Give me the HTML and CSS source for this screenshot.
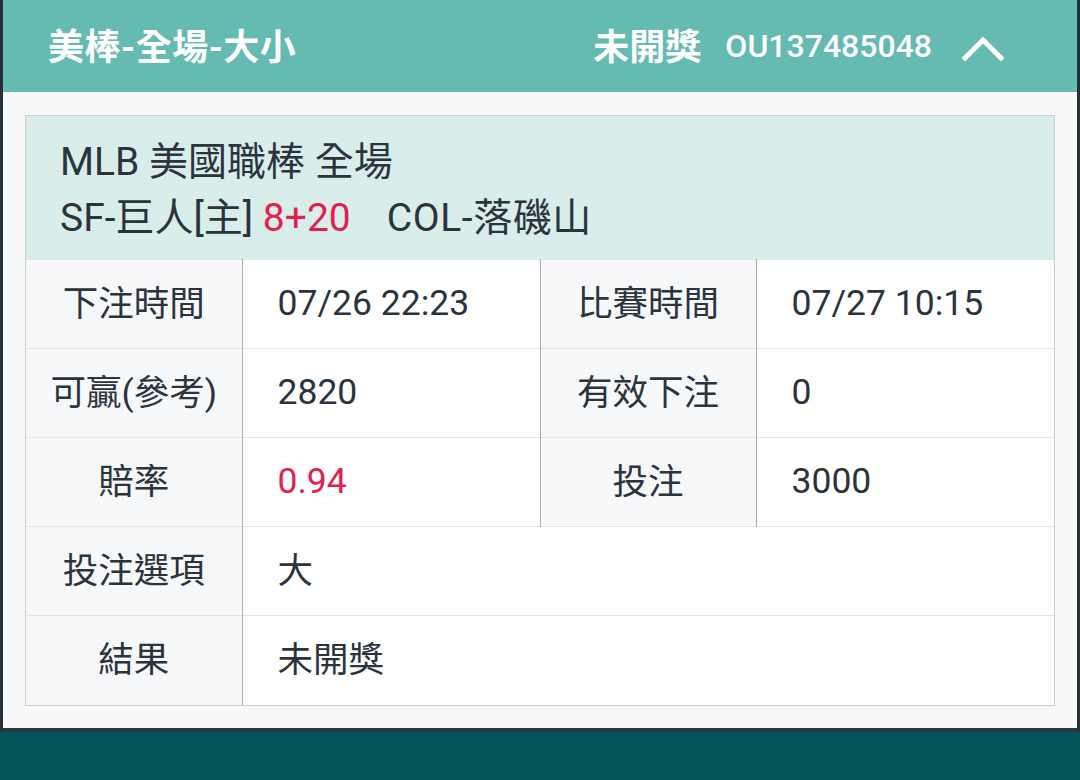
FILE: index.html
```html
<!DOCTYPE html>
<html lang="zh-Hant">

<head>
    <meta charset="UTF-8">
    <meta name="viewport" content="width=device-width, initial-scale=1.0">
    <title>注單明細</title>
    <link rel="stylesheet" href="styles.css">
</head>

<body>
    <div class="screen">
        <div class="sheet">
            <header class="sheet-head">
                <h1 class="title">美棒-全場-大小</h1>
                <div class="head-right">
                    <span class="status">未開獎</span>
                    <span class="order-no">OU137485048</span>
                    <svg class="chevron" width="42" height="26" viewBox="0 0 42 26">
                        <polyline points="3,23 21,5 39,23" fill="none" stroke="#fff" stroke-width="5" stroke-linecap="square"/>
                    </svg>
                </div>
            </header>

            <div class="sheet-body">
                <div class="bet-card">
                    <div class="match">
                        <p>MLB 美國職棒 全場</p>
                        <p>SF-巨人[主] <span class="hl">8+20</span><span class="away">COL-落磯山</span></p>
                    </div>

                    <table class="detail">
                        <colgroup>
                            <col class="c-label">
                            <col class="c-value">
                            <col class="c-label2">
                            <col>
                        </colgroup>
                        <tr>
                            <th>下注時間</th>
                            <td>07/26 22:23</td>
                            <th>比賽時間</th>
                            <td>07/27 10:15</td>
                        </tr>
                        <tr>
                            <th>可贏(參考)</th>
                            <td>2820</td>
                            <th>有效下注</th>
                            <td>0</td>
                        </tr>
                        <tr>
                            <th>賠率</th>
                            <td class="hl">0.94</td>
                            <th>投注</th>
                            <td>3000</td>
                        </tr>
                        <tr>
                            <th>投注選項</th>
                            <td colspan="3" class="cjk">大</td>
                        </tr>
                        <tr>
                            <th>結果</th>
                            <td colspan="3" class="cjk">未開獎</td>
                        </tr>
                    </table>
                </div>
            </div>
        </div>

        <div class="bottom-bar"></div>
    </div>
</body>

</html>
```

FILE: styles.css
```css
* {
    box-sizing: border-box;
}

body {
    margin: 0;
    background-color: #263039;
    font-family: Roboto, "Noto Sans CJK TC", sans-serif;
    color: #2b333d;
}

.screen {
    width: 1080px;
    height: 780px;
    display: flex;
    flex-direction: column;
}

.sheet {
    margin: 0 3px;
    border-bottom: 4px solid #2c3640;
}

.sheet-head {
    height: 92px;
    background-color: #65bbb2;
    color: #fff;
    display: flex;
    align-items: center;
    justify-content: space-between;
    padding: 0 73px 0 45px;
}

.title {
    margin: 0 0 4px;
    font-size: 36px;
    font-weight: bold;
    letter-spacing: 0.5px;
}

.head-right {
    display: flex;
    align-items: center;
}

.status {
    font-size: 36px;
    font-weight: bold;
    margin-right: 24px;
    margin-bottom: 4px;
}

.order-no {
    font-size: 32px;
    font-weight: 500;
    margin-right: 30px;
}

.chevron {
    display: block;
    margin-top: 4px;
}

.sheet-body {
    background-color: #f8f8f9;
    padding: 23px 22px 22px 22px;
}

.bet-card {
    border: 1px solid #c9cdd1;
}

.match {
    background-color: #d9eeeb;
    padding: 18px 34px 13px;
    font-size: 39px;
    line-height: 56px;
}

.match p {
    margin: 0;
}

.match .away {
    margin-left: 36px;
    letter-spacing: 0.6px;
}

.hl {
    color: #e41e4f;
}

.detail {
    width: 100%;
    border-collapse: collapse;
    table-layout: fixed;
    font-size: 35.5px;
}

.c-label {
    width: 216px;
}

.c-value {
    width: 298px;
}

.c-label2 {
    width: 216px;
}

.detail tr {
    height: 89px;
}

.detail th,
.detail td {
    border-top: 1px solid #e2e4e7;
    padding: 0;
}

.detail th {
    background-color: #f7f8fa;
    font-weight: normal;
    text-align: center;
    border-right: 1px solid #a9aeb4;
    padding-bottom: 8px;
}

.detail td {
    background-color: #fff;
    text-align: left;
    padding-left: 35px;
    padding-bottom: 2px;
}

.detail td.cjk {
    padding-bottom: 8px;
}

.detail td:nth-child(2) {
    border-right: 1px solid #a9aeb4;
}

.detail td[colspan] {
    border-right: none;
}

.bottom-bar {
    flex: 1;
    background-color: #035358;
}
```
